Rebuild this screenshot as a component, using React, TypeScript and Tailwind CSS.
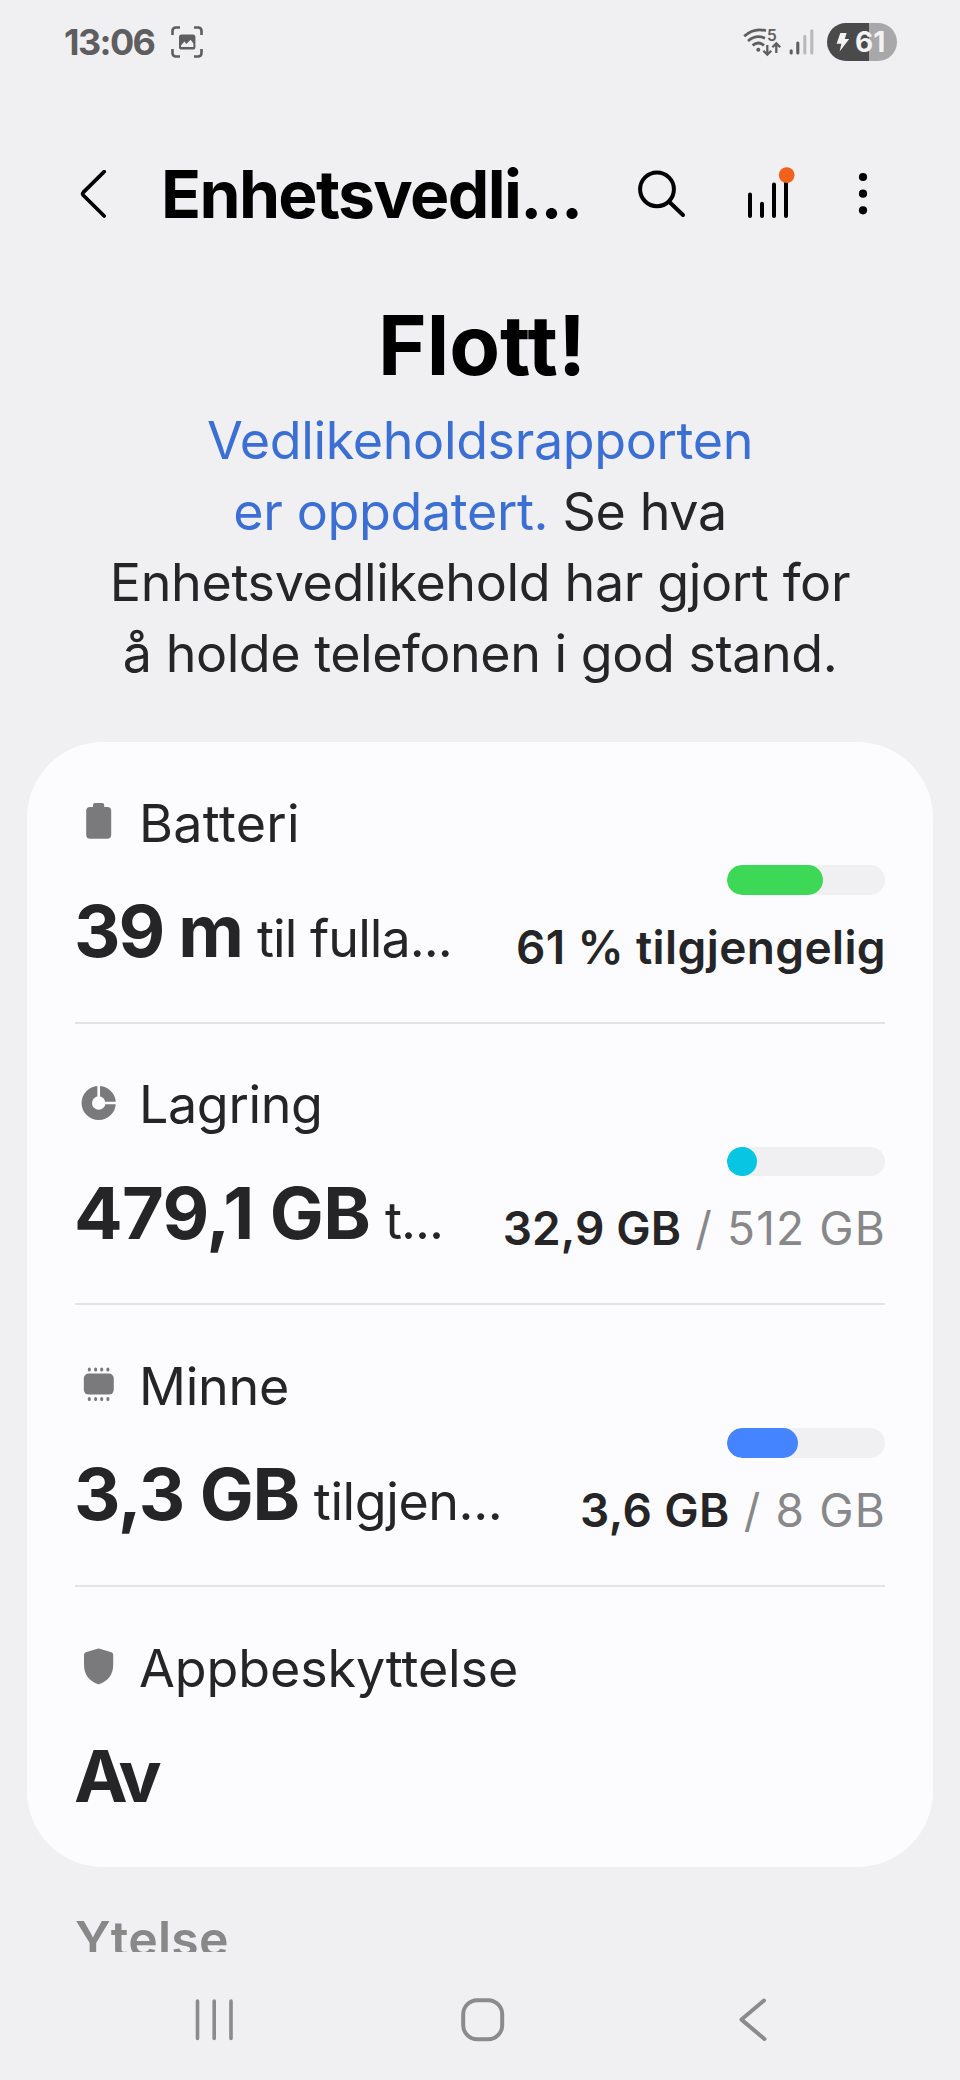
import type { ReactNode } from "react";

type Row = {
  label: string;
  labelClass: string;
  icon: ReactNode;
  value: string;
  valueClass: string;
  suffix?: string;
  suffixClass?: string;
  percent?: number;
  barClass?: string;
  used?: string;
  usedClass?: string;
  total?: string;
};

const rows: Row[] = [
  {
    label: "Batteri",
    labelClass: "tracking-[0.006em]",
    icon: <BatteryIcon />,
    value: "39 m",
    valueClass: "tracking-[-0.028em]",
    suffix: "til fulla...",
    suffixClass: "tracking-[-0.018em]",
    percent: 61,
    barClass: "bg-[#3cd856]",
    used: "61 % tilgjengelig",
    usedClass: "tracking-[0.008em]",
  },
  {
    label: "Lagring",
    labelClass: "tracking-[-0.007em]",
    icon: <StorageIcon />,
    value: "479,1 GB",
    valueClass: "tracking-[-0.01em]",
    suffix: "t...",
    suffixClass: "tracking-[-0.02em]",
    percent: 19.3,
    barClass: "bg-[#08c5e3]",
    used: "32,9 GB",
    usedClass: "tracking-[0.002em]",
    total: "/ 512 GB",
  },
  {
    label: "Minne",
    labelClass: "tracking-[-0.005em]",
    icon: <MemoryIcon />,
    value: "3,3 GB",
    valueClass: "tracking-[-0.018em]",
    suffix: "tilgjen...",
    suffixClass: "tracking-[-0.008em]",
    percent: 45,
    barClass: "bg-[#4484ff]",
    used: "3,6 GB",
    usedClass: "tracking-[0.008em]",
    total: "/ 8 GB",
  },
  {
    label: "Appbeskyttelse",
    labelClass: "tracking-[-0.002em]",
    icon: <ShieldIcon />,
    value: "Av",
    valueClass: "tracking-[-0.06em]",
  },
];

export default function App() {
  return (
    <main className="flex h-[2080px] w-[960px] flex-col overflow-hidden bg-[#f0f0f2] font-[Inter,sans-serif] text-[#252528]">
      <StatusBar />

      {/* HEADER */}
      <header className="mt-[70px] flex h-20 shrink-0 items-center pl-[68px] pr-[73px] text-black">
        <svg className="size-12 shrink-0" viewBox="0 0 48 48" fill="none" stroke="currentColor" strokeWidth="3.7" strokeLinecap="round">
          <path d="M36.2 1.6 L15.3 22.4 Q14 23.8 15.3 25.2 L36.2 46" />
        </svg>
        <h1 className="ml-[45px] flex-1 whitespace-nowrap text-[66px] font-bold leading-[80px] tracking-[-0.025em]">
          Enhetsvedli...
        </h1>
        <svg className="h-12 w-13 shrink-0" viewBox="0 0 52 48" fill="none" stroke="currentColor" strokeWidth="4" strokeLinecap="round">
          <circle cx="21" cy="19.3" r="16.9" />
          <path d="M33.4 32 L47 45" />
        </svg>
        <svg className="ml-[52px] h-14 w-14 shrink-0" viewBox="0 0 56 56" fill="none" stroke="currentColor" strokeWidth="4" strokeLinecap="round">
          <path d="M10 28.4 V50 M22 37.8 V50 M34 18.4 V50 M46 14 V50" />
          <circle cx="46.7" cy="9.1" r="7.9" fill="#f0611a" stroke="none" />
        </svg>
        <svg className="ml-[43px] size-12 shrink-0" viewBox="0 0 48 48" fill="currentColor">
          <circle cx="24" cy="7" r="4.1" />
          <circle cx="24" cy="23.7" r="4.1" />
          <circle cx="24" cy="40.3" r="4.1" />
        </svg>
      </header>

      {/* SUMMARY */}
      <section className="mt-[61px] shrink-0 text-center">
        <h2 className="pl-1 text-[83px] font-bold leading-[100px] text-black">Flott!</h2>
        <p className="mt-2.5 text-[52px] leading-[71px] tracking-[-0.007em]">
          <span className="text-[#3b6fd4]">
            Vedlikeholdsrapporten
            <br />
            er oppdatert.
          </span>{" "}
          Se hva
          <br />
          Enhetsvedlikehold har gjort for
          <br />
          <span className="tracking-[-0.009em]">å holde telefonen i god stand.</span>
        </p>
      </section>

      {/* STATUS CARD */}
      <section className="mx-[27px] mt-[53px] h-[1125px] shrink-0 rounded-[76px] bg-[#fcfcfe] px-12">
        {rows.map((row) => (
          <StatusRow key={row.label} {...row} />
        ))}
      </section>

      <section className="h-[85px] shrink-0 overflow-hidden pl-[75px] pt-[42px]">
        <h3 className="text-[50px] font-semibold leading-[60px] tracking-[0.004em] text-[#888889]">Ytelse</h3>
      </section>

      {/* NAVIGATION */}
      <nav className="flex h-32 shrink-0 items-center justify-between pl-[190px] pr-[184px] pt-2 text-[#8b8b8d]">
        <svg className="size-12" viewBox="0 0 48 48" fill="none" stroke="currentColor" strokeWidth="3.6" strokeLinecap="round">
          <path d="M7.5 5 V42.5 M24.2 5 V42.5 M41 5 V42.5" />
        </svg>
        <svg className="size-12" viewBox="0 0 48 48" fill="none" stroke="currentColor" strokeWidth="4">
          <rect x="4.2" y="4.2" width="39" height="39" rx="14" />
        </svg>
        <svg className="size-12" viewBox="0 0 48 48" fill="none" stroke="currentColor" strokeWidth="4" strokeLinecap="round" strokeLinejoin="round">
          <path d="M36 4.5 L13.5 23.6 L36.5 43" />
        </svg>
      </nav>
    </main>
  );
}

function StatusRow({
  label,
  labelClass,
  icon,
  value,
  valueClass,
  suffix,
  suffixClass,
  percent,
  barClass,
  used,
  usedClass,
  total,
}: Row) {
  return (
    <div className="flex h-[281.7px] justify-between border-b-2 border-[#e3e3e5] last:border-b-0">
      <div className="pt-[55px]">
        <div className="flex h-12 items-center gap-4">
          {icon}
          <span className={`pt-[5px] text-[52px] leading-[48px] ${labelClass}`}>{label}</span>
        </div>
        <div className="-ml-px mt-[46px] flex items-baseline gap-[15px] whitespace-nowrap">
          <span className={`text-[72px] font-bold leading-[80px] ${valueClass}`}>{value}</span>
          {suffix && <span className={`text-[52px] leading-none ${suffixClass}`}>{suffix}</span>}
        </div>
      </div>

      {percent !== undefined && (
        <div className="flex flex-col items-end pt-[123px]">
          <div className="h-[29.5px] w-[158px] shrink-0 overflow-hidden rounded-full bg-[#f0f0f2]">
            <div className={`h-full rounded-full ${barClass}`} style={{ width: `${percent}%` }} />
          </div>
          <div className="-mr-px mt-[24px] flex gap-[14px] whitespace-nowrap text-[46px] leading-[56px]">
            <span className={`font-semibold ${usedClass}`}>{used}</span>
            {total && <span className="tracking-[0.025em] text-[#88888a]">{total}</span>}
          </div>
        </div>
      )}
    </div>
  );
}

function StatusBar() {
  return (
    <div className="flex h-[84px] shrink-0 items-center pl-16 pr-[63px] text-[#5e5e60]">
      <span className="text-[36px] font-bold leading-[44px] tracking-[-0.045em]">13:06</span>
      <svg className="ml-[17px] size-8" viewBox="0 0 32 32" fill="none">
        <path
          d="M1.5 9 V5 Q1.5 1.5 5 1.5 H9 M23 1.5 H27 Q30.5 1.5 30.5 5 V9 M30.5 23 V27 Q30.5 30.5 27 30.5 H23 M9 30.5 H5 Q1.5 30.5 1.5 27 V23"
          stroke="currentColor"
          strokeWidth="2.6"
        />
        <rect x="8" y="8.5" width="16.4" height="15" rx="2.6" fill="currentColor" />
        <path d="M10 21 V19.5 L13.4 15.6 L15.3 18 L19.6 13.8 L22.4 17.4 V21 Z" fill="#f0f0f2" />
      </svg>

      <div className="ml-auto flex items-center">
        {/* wifi 5 with traffic arrows */}
        <svg className="h-8 w-10" viewBox="0 0 40 32" fill="none" stroke="currentColor" strokeWidth="2.7">
          <path d="M1.2 10.2 Q11 1.2 23 4.8" />
          <path d="M5 15 Q13 8.2 22 12.2" />
          <path d="M9.6 19.4 Q15.4 14.6 21 19.4" />
          <circle cx="15.3" cy="23.8" r="2" fill="currentColor" stroke="none" />
          <path d="M24.3 19 V28.4 M20.4 24.8 L24.3 28.7 L28.2 24.8" strokeWidth="2.3" />
          <path d="M33.3 27 V17.6 M29.4 21.2 L33.3 17.3 L37.2 21.2" strokeWidth="2.3" />
          <text x="24" y="15.2" fontSize="15.5" fontWeight="600" fill="currentColor" stroke="none">
            5
          </text>
        </svg>
        <svg className="ml-1 h-8 w-[30px]" viewBox="0 0 30 32" fill="none" strokeWidth="3.1" strokeLinecap="round">
          <path d="M4.2 24.8 V27 M10.8 17 V27" stroke="#5e5e60" />
          <path d="M17.8 10.2 V27 M24.8 4.8 V27" stroke="#b9b9bb" />
        </svg>
        <div className="ml-2.5 flex h-[37.5px] w-[70px] items-center rounded-full bg-[linear-gradient(90deg,#4a4a4b_60.5%,#a8a8aa_60.5%)] pl-[9px] text-[#f3f3f4]">
          <svg className="h-[19px] w-[14px]" viewBox="0 0 14 19" fill="currentColor">
            <path d="M4.3 0 H10.6 L8.8 6 H13.2 L3.6 18.6 L5.4 10.8 H0.6 Z" />
          </svg>
          <span className="ml-[5px] text-[28px] font-bold leading-8">61</span>
        </div>
      </div>
    </div>
  );
}

function BatteryIcon() {
  return (
    <svg className="size-12" viewBox="0 0 48 48" fill="#7a7a7c">
      <rect x="18" y="6" width="11.2" height="8" rx="2" />
      <rect x="11.2" y="10" width="25" height="31.8" rx="4" />
    </svg>
  );
}

function StorageIcon() {
  return (
    <svg className="size-12" viewBox="0 0 48 48" fill="none">
      <circle cx="23.7" cy="24" r="11.9" stroke="#7a7a7c" strokeWidth="10.4" />
      <path d="M23.7 24 V6 M23.7 24 H42" stroke="#fcfcfe" strokeWidth="2.7" />
    </svg>
  );
}

function MemoryIcon() {
  return (
    <svg className="size-12" viewBox="0 0 48 48" fill="#7a7a7c">
      <rect x="8.8" y="13.6" width="30" height="21" rx="5" />
      <path
        d="M14.3 9 V10 M20.6 9 V10 M26.7 9 V10 M32.9 9 V10 M14.3 38.6 V39.6 M20.6 38.6 V39.6 M26.7 38.6 V39.6 M32.9 38.6 V39.6"
        stroke="#7a7a7c"
        strokeWidth="3"
        strokeLinecap="round"
      />
    </svg>
  );
}

function ShieldIcon() {
  return (
    <svg className="size-12" viewBox="0 0 48 48" fill="#7a7a7c">
      <path d="M22.4 6.7 Q23.6 6.2 24.8 6.7 L36.4 10.2 Q38.2 10.8 38.2 12.6 V22.5 C38.2 33 33 38.8 24.6 42 Q23.6 42.4 22.6 42 C14.2 38.8 9 33 9 22.5 V12.6 Q9 10.8 10.8 10.2 Z" />
    </svg>
  );
}
